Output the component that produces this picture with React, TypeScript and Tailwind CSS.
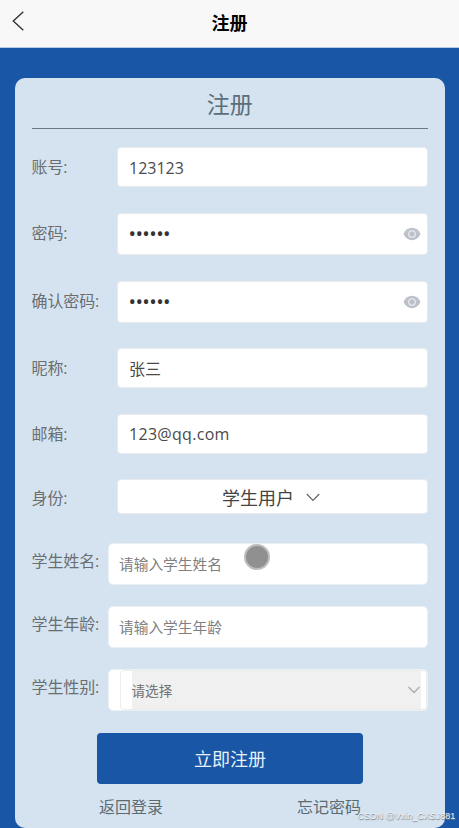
import { ReactNode } from "react";

function Row({ label, className, labelClass = "", children }: {
  label: string;
  className: string;
  labelClass?: string;
  children: ReactNode;
}) {
  return (
    <div className={`flex items-center ${className}`}>
      <label className={`flex-1 whitespace-nowrap text-[16px] leading-6 tracking-[-0.1px] text-[#6a6e71] ${labelClass}`}>{label}</label>
      {children}
    </div>
  );
}

function EyeIcon() {
  return (
    <svg className="w-[18px] h-[14px] mr-[6.5px] shrink-0" viewBox="0 0 18 14">
      <path d="M0.5 7C2.3 3 5.3 0.8 9 0.8S15.7 3 17.5 7C15.7 11 12.7 13.2 9 13.2S2.3 11 0.5 7Z" fill="#bcc1ca" />
      <circle cx="9" cy="7" r="3.3" fill="#bcc1ca" stroke="#eff0f3" strokeWidth="1.1" />
    </svg>
  );
}

const box = "flex items-center w-[311px] h-full rounded-[4px] border border-[#e8eaed] bg-white";
const wideBox = "flex items-center w-[320px] h-full rounded-[5px] border border-[#e9f0f6] bg-white";
const input = "min-w-0 flex-1 pl-[11px] text-[16px] leading-6 text-[#4a4a4a] outline-none bg-transparent";
const password = "min-w-0 flex-1 pl-[10.5px] text-[20px] leading-6 tracking-[-0.6px] text-[#333] outline-none bg-transparent";
const wideInput = "min-w-0 flex-1 pl-[10px] text-[14.7px] leading-6 text-[#444] placeholder:text-[#808080] outline-none bg-transparent";

export default function App() {
  return (
    <div className="relative w-full h-[828px] overflow-hidden flex flex-col bg-[#1956a5] font-['Open_Sans','Noto_Sans_CJK_SC',sans-serif]">
      <header className="h-12 shrink-0 grid grid-cols-[40px_1fr_40px] items-center bg-[#f8f8f8] border-b border-[#b5cbe3]">
        <svg className="w-3 h-5 ml-3 -mt-[5px]" viewBox="0 0 12 20" fill="none" stroke="#333" strokeWidth="1.4">
          <path d="M11.3 0.8L1.3 10L11.3 19.2" />
        </svg>
        <h1 className="text-center text-[18px] leading-6 font-bold text-black -mt-px">注册</h1>
      </header>

      <main className="mt-[30px] ml-[14.5px] w-[430.5px] h-[750px] shrink-0 rounded-[10px] bg-[#d5e3f0] pl-[17px] pr-[17px]">
        <h2 className="h-[51px] pt-2.5 border-b border-[#6d7687] text-center text-[23px] leading-8 text-[#5b6f7b]">注册</h2>

        <form>
          <Row label="账号:" className="h-10 mt-[18px]" labelClass="-mt-px">
            <div className={box}><input className={`${input} pt-px`} defaultValue="123123" /></div>
          </Row>
          <Row label="密码:" className="h-[42px] mt-[26px]" labelClass="-mt-[3px]">
            <div className={box}>
              <input type="password" className={password} defaultValue="123123" />
              <EyeIcon />
            </div>
          </Row>
          <Row label="确认密码:" className="h-[42px] mt-[26px]" labelClass="-mt-[3px]">
            <div className={box}>
              <input type="password" className={password} defaultValue="123123" />
              <EyeIcon />
            </div>
          </Row>
          <Row label="昵称:" className="h-10 mt-[25px]">
            <div className={box}><input className={`${input} pt-0.5`} defaultValue="张三" /></div>
          </Row>
          <Row label="邮箱:" className="h-10 mt-[25.5px]">
            <div className={box}><input className={`${input} tracking-[0.3px]`} defaultValue="123@qq.com" /></div>
          </Row>
          <Row label="身份:" className="h-[35px] mt-[25.5px]" labelClass="mt-[3px]">
            <div className={`${box} justify-center gap-3 pr-[3px]`}>
              <span className="text-[18px] leading-6 text-[#444] mt-0.5">学生用户</span>
              <svg className="w-[14px] h-[9px] mt-0.5" viewBox="0 0 14 9" fill="none" stroke="#666" strokeWidth="1.2">
                <path d="M0.8 1L7 7.5L13.2 1" />
              </svg>
            </div>
          </Row>
          <Row label="学生姓名:" className="h-[42px] mt-[29px]" labelClass="-mt-1.5">
            <div className={wideBox}><input className={wideInput} placeholder="请输入学生姓名" /></div>
          </Row>
          <Row label="学生年龄:" className="h-[42px] mt-[21px]" labelClass="-mt-1.5">
            <div className={wideBox}><input className={wideInput} placeholder="请输入学生年龄" /></div>
          </Row>
          <Row label="学生性别:" className="h-[42px] mt-[21px]" labelClass="-mt-1.5">
            <div className={`${wideBox} pl-[10.5px]`}>
              <div className="flex-1 h-full flex rounded-[4px] border border-[#ececec] pl-[11px] pr-[5px]">
                <div className="flex-1 flex items-center justify-between bg-[#f0f0f0] pr-[1.5px]">
                  <span className="text-[13.6px] leading-6 text-[#707070] mt-px">请选择</span>
                  <svg className="w-3 h-2" viewBox="0 0 12 8" fill="none" stroke="#adadad" strokeWidth="1.4">
                    <path d="M0.5 1L6 6.5L11.5 1" />
                  </svg>
                </div>
              </div>
            </div>
          </Row>

          <button type="button" className="block w-[266px] h-[51px] mt-[22px] ml-[65.5px] pt-px rounded-[4px] bg-[#1956a5] text-[18px] leading-6 text-[#e8f0f9]">立即注册</button>
        </form>

        <div className="flex justify-between mt-[11px] pl-[67.5px] pr-[67px] text-[16px] leading-6 text-[#5b6b70]">
          <a>返回登录</a>
          <a>忘记密码</a>
        </div>
      </main>

      {/* touch pointer */}
      <div className="absolute left-[243.5px] top-[543.5px] w-[26px] h-[26px] rounded-full border-2 border-[#bdbdbd] bg-[#909090]" />
      <span className="absolute left-[357.5px] top-[808.5px] whitespace-nowrap font-['Liberation_Sans',sans-serif] text-[9px] leading-[14px] text-[#edf1f5] [text-shadow:0.5px_0.5px_1px_#777]">CSDN @Vxin_CXSJ881</span>
    </div>
  );
}
